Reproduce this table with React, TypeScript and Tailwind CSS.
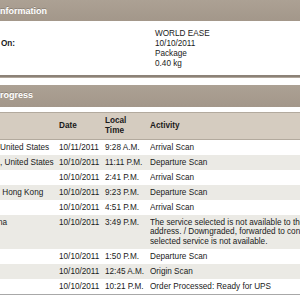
import React from "react";

const rows: { loc: string; shift?: boolean; date: string; time: string; act: string[] }[] = [
  { loc: "United States", date: "10/11/2011", time: "9:28 A.M.", act: ["Arrival Scan"] },
  { loc: ", United States", date: "10/10/2011", time: "11:11 P.M.", act: ["Departure Scan"] },
  { loc: "", date: "10/10/2011", time: "2:41 P.M.", act: ["Arrival Scan"] },
  { loc: " Hong Kong", date: "10/10/2011", time: "9:23 P.M.", act: ["Departure Scan"] },
  { loc: "", date: "10/10/2011", time: "4:51 P.M.", act: ["Arrival Scan"] },
  {
    loc: "na",
    shift: true,
    date: "10/10/2011",
    time: "3:49 P.M.",
    act: [
      "The service selected is not available to the consignee's",
      "address. / Downgraded, forwarded to consignee as",
      "selected service is not available.",
    ],
  },
  { loc: "", date: "10/10/2011", time: "1:50 P.M.", act: ["Departure Scan"] },
  { loc: "", date: "10/10/2011", time: "12:45 A.M.", act: ["Origin Scan"] },
  { loc: "", date: "10/10/2011", time: "10:21 P.M.", act: ["Order Processed: Ready for UPS"] },
];

export default function App() {
  return (
    <div
      className="w-[300px] h-[300px] overflow-hidden bg-white text-[#1a1a1a]"
      style={{ fontFamily: '"Liberation Sans", Arial, sans-serif' }}
    >
      {/* header 1 */}
      <div className="h-[21px] pt-[3px] bg-gradient-to-b from-[#aca194] to-[#a3978a] flex items-center">
        <span className="text-white font-bold text-[9px] [text-shadow:0_-1px_0_rgba(0,0,0,0.2)]">
          nformation
        </span>
      </div>
      {/* info */}
      <div className="h-[54px] flex pt-[8px] text-[8.2px] leading-[10px]">
        <div className="w-[155px] pl-[1px] flex flex-col">
          <div className="h-[10px]" />
          <div className="font-bold">On:</div>
        </div>
        <div className="flex flex-col">
          <div>WORLD EASE</div>
          <div>10/10/2011</div>
          <div>Package</div>
          <div>0.40 kg</div>
        </div>
      </div>
      <div className="h-[3px] bg-[#8c8277] border-b border-[#b0a79c]" />
      <div className="h-[7px]" />
      {/* header 2 */}
      <div className="h-[22px] bg-gradient-to-b from-[#aca194] to-[#a3978a] flex items-center">
        <span className="text-white font-bold text-[9px] [text-shadow:0_-1px_0_rgba(0,0,0,0.2)]">
          rogress
        </span>
      </div>
      <div className="h-[5px]" />
      {/* table */}
      <div className="text-[8.2px] leading-[9.5px]">
        <div className="h-[28px] flex items-center bg-[#d5ccc0] border-y border-[#b3aa9e] font-bold text-[#1a1a1a]">
          <div className="w-[59px]" />
          <div className="w-[46px]">Date</div>
          <div className="w-[45px] flex flex-col leading-[10px]">
            <span>Local</span>
            <span>Time</span>
          </div>
          <div className="flex-1">Activity</div>
        </div>
        {rows.map((r, i) => (
          <div
            key={i}
            className={`flex py-[2.75px] whitespace-pre ${i % 2 === 1 ? "bg-[#ebeae5]" : "bg-white"}`}
          >
            <div className="w-[59px] overflow-hidden">
              <span className={r.shift ? "ml-[-2px]" : ""}>{r.loc}</span>
            </div>
            <div className="w-[46px]">{r.date}</div>
            <div className="w-[45px]">{r.time}</div>
            <div className="flex-1 flex flex-col overflow-hidden">
              {r.act.map((a, j) => (
                <span key={j} className="whitespace-nowrap">
                  {a}
                </span>
              ))}
            </div>
          </div>
        ))}
        <div className="h-px bg-[#a8a8a8]" />
      </div>
    </div>
  );
}
